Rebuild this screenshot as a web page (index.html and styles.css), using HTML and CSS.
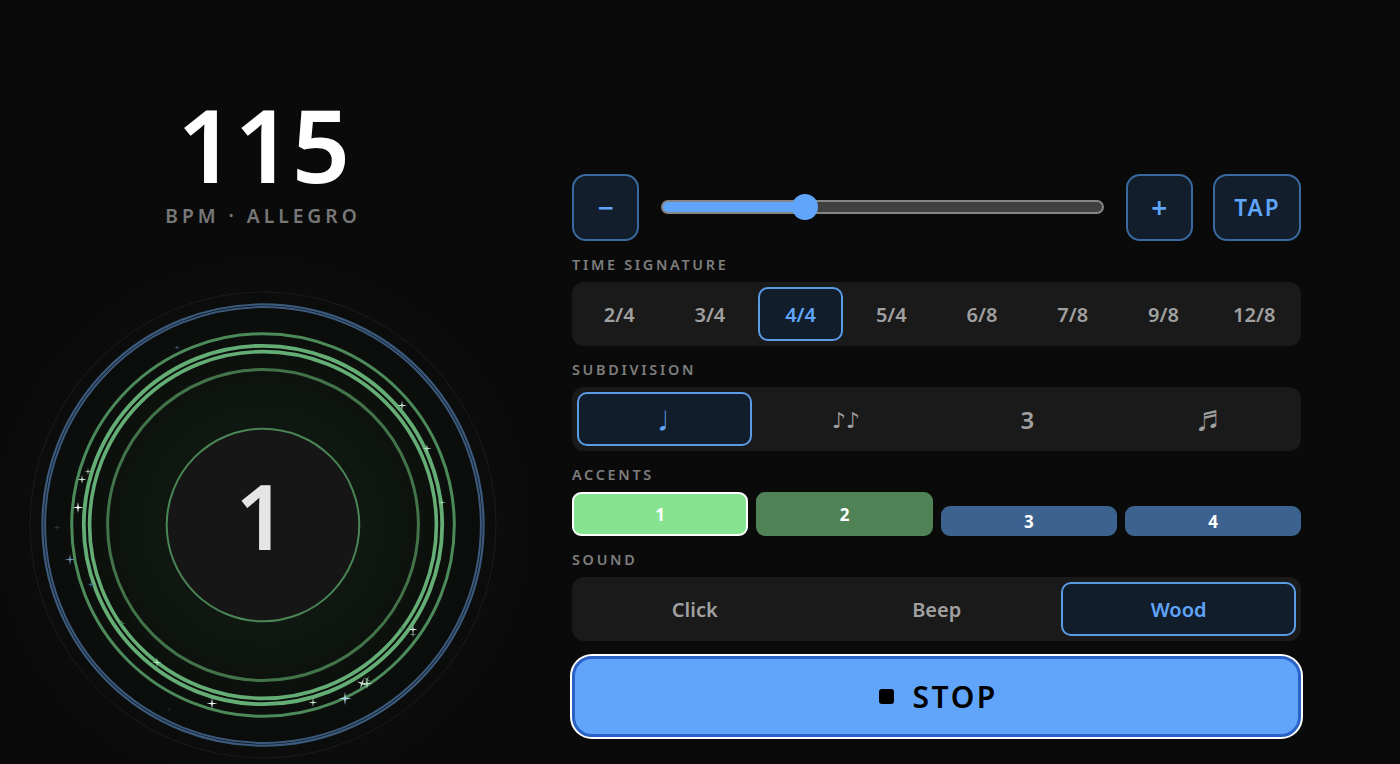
FILE: index.html
```html
<!DOCTYPE html>
<html lang="en">
<head>
<meta charset="utf-8">
<title>Metronome</title>
<link rel="stylesheet" href="styles.css">
</head>
<body>
<main class="app">
  <section class="display">
    <div class="readout">
      <div class="bpm">115</div>
      <div class="tempo">BPM · ALLEGRO</div>
    </div>
    <div class="dial">
      <svg class="rings" viewBox="0 0 470 470" width="470" height="470" aria-hidden="true">
        <defs>
          <radialGradient id="glow" cx="235" cy="235" r="270" gradientUnits="userSpaceOnUse">
            <stop offset="0" stop-color="#3c8c46" stop-opacity=".16"/>
            <stop offset=".4" stop-color="#3c8c46" stop-opacity=".1"/>
            <stop offset=".7" stop-color="#3c8c46" stop-opacity=".035"/>
            <stop offset="1" stop-color="#3c8c46" stop-opacity="0"/>
          </radialGradient>
          <path id="spark" d="M0,-1L.14,-.14L1,0L.14,.14L0,1L-.14,.14L-1,0L-.14,-.14Z"/>
        </defs>
        <circle cx="235" cy="235" r="270" fill="url(#glow)"/>
        <g fill="none">
          <circle cx="235" cy="235" r="233" stroke="#1a1c1c" stroke-width="1"/>
          <circle cx="235" cy="235" r="220.6" stroke="#3b5a7e" stroke-width="2.2"/>
          <circle cx="235" cy="235" r="217.9" stroke="#3b5a7e" stroke-width="2"/>
          <circle cx="235" cy="235" r="191.3" stroke="#4c8a5a" stroke-width="3"/>
          <circle cx="235" cy="235" r="179.2" stroke="#64ae75" stroke-width="3.8"/>
          <circle cx="235" cy="235" r="173.4" stroke="#64ae75" stroke-width="3.6"/>
          <circle cx="235" cy="235" r="155.4" stroke="#437449" stroke-width="3"/>
        </g>
        <circle cx="235" cy="235" r="96.3" fill="#161616" stroke="#4a8555" stroke-width="2"/>
        <g class="sparks">
          <use href="#spark" transform="translate(149 57.5) scale(3)" fill="#3e5f85"/>
          <use href="#spark" transform="translate(60 181.5) scale(3.5)" fill="#b5d8bd"/>
          <use href="#spark" transform="translate(54 189.5) scale(4.5)" fill="#cfe8d4"/>
          <use href="#spark" transform="translate(50 217.5) scale(5.5)" fill="#ffffff"/>
          <use href="#spark" transform="translate(374 115.5) scale(5)" fill="#c8e6cf"/>
          <use href="#spark" transform="translate(399 158.5) scale(4.5)" fill="#b0e0bb"/>
          <use href="#spark" transform="translate(414 212.5) scale(4)" fill="#a0d8ae"/>
          <use href="#spark" transform="translate(29 237.5) scale(3.5)" fill="#2a3f3c"/>
          <use href="#spark" transform="translate(42 269.5) scale(5.5)" fill="#6f8fb0"/>
          <use href="#spark" transform="translate(63 294.5) scale(3.5)" fill="#3e6f9f"/>
          <use href="#spark" transform="translate(94 333.5) scale(4)" fill="#4c8a5a"/>
          <use href="#spark" transform="translate(129 372.5) scale(5)" fill="#a6e6b4"/>
          <use href="#spark" transform="translate(184 413.5) scale(5.5)" fill="#e6f5ea"/>
          <use href="#spark" transform="translate(141 419.5) scale(3)" fill="#1f2a26"/>
          <use href="#spark" transform="translate(374 338.5) scale(4)" fill="#4c8a5a"/>
          <use href="#spark" transform="translate(385 339.5) scale(4.5)" fill="#d5ecd9"/>
          <use href="#spark" transform="translate(385 344.5) scale(3.5)" fill="#7f9f88"/>
          <use href="#spark" transform="translate(334 393.5) rotate(20) scale(5.5)" fill="#d5ecd9"/>
          <use href="#spark" transform="translate(339 393.5) scale(5.5)" fill="#c5e4cc"/>
          <use href="#spark" transform="translate(339 389.5) rotate(30) scale(4)" fill="#8fae98"/>
          <use href="#spark" transform="translate(317 408.5) scale(6.5)" fill="#a8d0da"/>
          <use href="#spark" transform="translate(285 412.5) scale(4.5)" fill="#bfe0c7"/>
        </g>
      </svg>
      <div class="beat">1</div>
    </div>
  </section>

  <section class="controls">
    <div class="tempo-row">
      <button class="square">−</button>
      <input class="slider" type="range" min="40" max="280" value="115" aria-label="Tempo">
      <button class="square">+</button>
      <button class="square tap">TAP</button>
    </div>

    <div class="group">
      <div class="label">TIME SIGNATURE</div>
      <div class="seg">
        <button class="opt">2/4</button>
        <button class="opt">3/4</button>
        <button class="opt on">4/4</button>
        <button class="opt">5/4</button>
        <button class="opt">6/8</button>
        <button class="opt">7/8</button>
        <button class="opt">9/8</button>
        <button class="opt">12/8</button>
      </div>
    </div>

    <div class="group">
      <div class="label">SUBDIVISION</div>
      <div class="seg">
        <button class="opt glyph on">♩</button>
        <button class="opt pair">♪♪</button>
        <button class="opt note">3</button>
        <button class="opt glyph">♬</button>
      </div>
    </div>

    <div class="group">
      <div class="label">ACCENTS</div>
      <div class="accents">
        <button class="accent current">1</button>
        <button class="accent strong">2</button>
        <button class="accent weak">3</button>
        <button class="accent weak">4</button>
      </div>
    </div>

    <div class="group">
      <div class="label">SOUND</div>
      <div class="seg">
        <button class="opt">Click</button>
        <button class="opt">Beep</button>
        <button class="opt on">Wood</button>
      </div>
    </div>

    <button class="stop"><span class="stop-icon"></span>STOP</button>
  </section>
</main>
</body>
</html>
```

FILE: styles.css
```css
* { box-sizing: border-box; }

html, body {
  margin: 0;
  height: 100%;
  overflow: hidden;
  background: #0a0a0a;
  font-family: "Noto Sans", "DejaVu Sans", sans-serif;
}

button {
  font-family: inherit;
  margin: 0;
  padding: 0;
  cursor: pointer;
}

.app {
  display: flex;
  height: 764px;
}

.display {
  width: 526px;
  display: flex;
  flex-direction: column;
  align-items: center;
  justify-content: space-between;
  padding: 93px 0 4.5px;
}

.readout {
  text-align: center;
}

.bpm {
  font-size: 102px;
  font-weight: 600;
  line-height: 102px;
  letter-spacing: -1px;
  color: #fff;
}

.tempo {
  margin-top: 6.5px;
  font-size: 19.2px;
  font-weight: 600;
  letter-spacing: 4px;
  color: #777;
}

.dial {
  position: relative;
  width: 470px;
  height: 470px;
}

.rings {
  display: block;
  overflow: visible;
}

.beat {
  position: absolute;
  inset: 0;
  display: flex;
  align-items: center;
  justify-content: center;
  padding: 0 4px 20px 0;
  font-size: 90px;
  font-weight: 600;
  color: #e5e5e5;
}

.controls {
  width: 729.4px;
  margin-left: 46px;
  display: flex;
  flex-direction: column;
  justify-content: flex-end;
  gap: 14px;
  padding-bottom: 27.5px;
}

.tempo-row {
  display: flex;
  align-items: center;
  gap: 21.5px;
}

.tempo-row .square + .square {
  margin-left: -1px;
}

.square {
  flex: none;
  width: 67.4px;
  height: 67.4px;
  border: 2px solid #39699e;
  border-radius: 14px;
  background: #121e2b;
  color: #60a5fa;
  font-size: 28px;
  font-weight: 600;
}

.tap {
  width: 88px;
  font-size: 22.5px;
  letter-spacing: 2px;
}

.slider {
  flex: 1;
  min-width: 0;
  height: 26px;
  margin: 0;
  background: transparent;
  appearance: none;
  -webkit-appearance: none;
}

.slider::-webkit-slider-runnable-track {
  height: 14px;
  border: 2px solid #858585;
  border-radius: 7px;
  background: linear-gradient(to right, #60a5fa 33%, #404040 33%);
}

.slider::-webkit-slider-thumb {
  -webkit-appearance: none;
  width: 26px;
  height: 26px;
  margin-top: -8px;
  border-radius: 50%;
  background: #60a5fa;
}

.label {
  height: 19px;
  margin-bottom: 8px;
  font-size: 14.4px;
  line-height: 19px;
  font-weight: 600;
  letter-spacing: 2.7px;
  color: #7e7e7e;
}

.seg {
  display: flex;
  gap: 6.4px;
  padding: 5px;
  height: 64px;
  border-radius: 12px;
  background: #1a1a1a;
}

.opt {
  flex: 1 1 0;
  min-width: 0;
  border: 2px solid transparent;
  border-radius: 10px;
  background: transparent;
  color: #a0a0a0;
  font-size: 20px;
  font-weight: 600;
}

.opt.on {
  border-color: #5a9be6;
  background: #111d2a;
  color: #60a5fa;
}

.note {
  font-size: 24px;
}

.pair {
  font-size: 22px;
}

.glyph {
  font-family: "Noto Sans CJK JP", "DejaVu Sans", sans-serif;
  font-size: 21px;
}

.accents {
  display: grid;
  grid-template-columns: repeat(4, 1fr);
  align-items: end;
  gap: 8px;
  height: 44px;
}

.accent {
  border: 0;
  border-radius: 9px;
  color: #fff;
  font-size: 17px;
  font-weight: 700;
}

.current {
  height: 44px;
  border: 2px solid #fff;
  background: #86e490;
}

.strong {
  height: 44px;
  background: #4f8255;
}

.weak {
  height: 30px;
  background: #3c6390;
}

.stop {
  display: flex;
  align-items: center;
  justify-content: center;
  gap: 18px;
  height: 81px;
  margin-top: .5px;
  padding-left: 4px;
  border: 3px solid #2a62c8;
  border-radius: 20px;
  box-shadow: 0 0 0 2px #fff;
  background: #60a5fa;
  color: #000;
  font-size: 30px;
  font-weight: 600;
  letter-spacing: 2.6px;
}

.stop-icon {
  width: 15px;
  height: 15px;
  border-radius: 3px;
  background: #000;
}
```
